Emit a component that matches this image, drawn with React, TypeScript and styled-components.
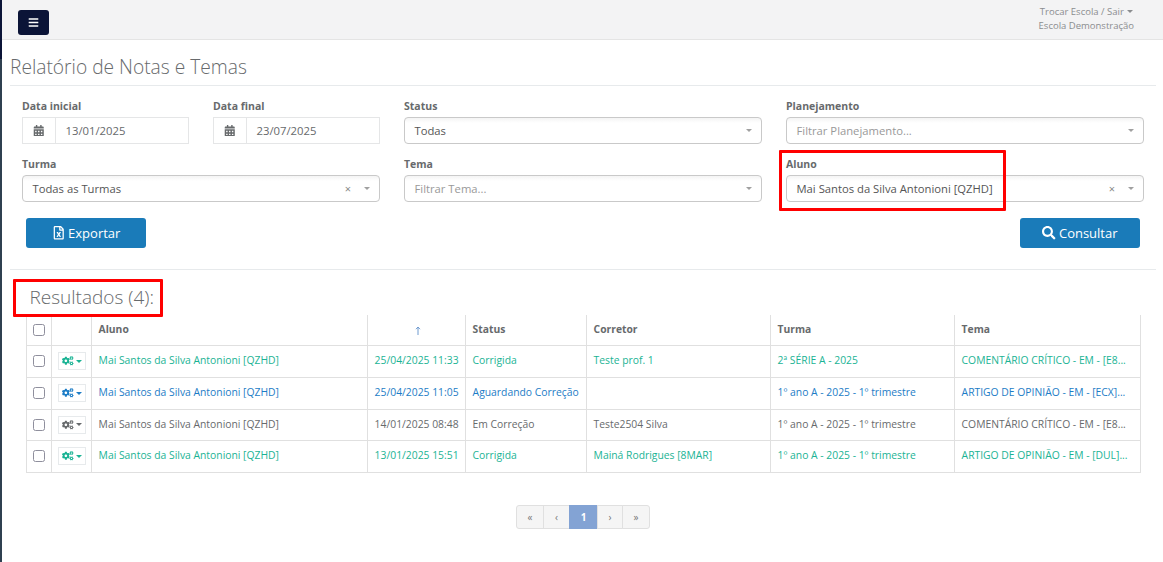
import styled, { createGlobalStyle } from 'styled-components';
import { FaBars, FaCalendarAlt, FaCogs, FaRegFileExcel, FaSearch } from 'react-icons/fa';

const GlobalStyle = createGlobalStyle`
  html, body {
    margin: 0;
    padding: 0;
    background: #fff;
    overflow: hidden;
  }
  body {
    font-family: "Open Sans", "Liberation Sans", sans-serif;
    font-size: 11px;
    color: #676a6c;
  }
  * {
    box-sizing: border-box;
  }
`;

type Tone = 'done' | 'waiting' | 'progress';

const toneColors: Record<Tone, string> = {
  done: '#1ab394',
  waiting: '#1c7cc6',
  progress: '#676a6c',
};

const Page = styled.div`
  position: relative;
  display: flex;
  width: 1163px;
  height: 562px;
  overflow: hidden;
`;

const SideStrip = styled.div`
  width: 2px;
  flex: none;
  background: linear-gradient(#0b1437 0, #0b1437 59px, #2f4050 59px);
`;

const Main = styled.div`
  flex: 1;
  min-width: 0;
`;

const TopBar = styled.header`
  height: 40px;
  background: #f3f3f4;
  border-bottom: 1px solid #e4e4e4;
  display: flex;
  justify-content: space-between;
  padding: 10px 29px 0 16px;
`;

const MenuButton = styled.button`
  width: 31px;
  height: 25px;
  padding: 0;
  border: none;
  border-radius: 3px;
  background: #0b1437;
  color: #fff;
  display: flex;
  align-items: center;
  justify-content: center;
  font-size: 11px;
`;

const UserBox = styled.div`
  margin-top: -5px;
  font-size: 9.5px;
  line-height: 14px;
  color: #8b8d8f;
  text-align: center;
`;

const Caret = styled.span`
  display: inline-block;
  margin-left: 3px;
  vertical-align: 2px;
  border-left: 3px solid transparent;
  border-right: 3px solid transparent;
  border-top: 3px solid #8b8d8f;
`;

const Content = styled.div`
  padding: 0 7px 0 8px;
`;

const PageTitle = styled.h2`
  margin: 0;
  height: 46px;
  padding-top: 14px;
  border-bottom: 1px solid #e7eaec;
  font-size: 19.2px;
  line-height: 25px;
  font-weight: 300;
  color: #676a6c;
`;

const FilterGrid = styled.div`
  display: grid;
  grid-template-columns: repeat(3, 358px);
  column-gap: 24px;
  row-gap: 13px;
  padding: 13px 0 0 12px;
`;

const DatePair = styled.div`
  display: grid;
  grid-template-columns: repeat(2, 167px);
  column-gap: 24px;
`;

const Field = styled.div`
  min-width: 0;
`;

const Label = styled.label`
  display: block;
  height: 18px;
  line-height: 15px;
  font-size: 10.5px;
  font-weight: 700;
  color: #676a6c;
`;

const DateInput = styled.div`
  display: flex;
  height: 27px;
  border: 1px solid #e5e6e7;
  font-size: 11.3px;
`;

const DateAddon = styled.span`
  width: 33px;
  flex: none;
  display: flex;
  align-items: center;
  justify-content: center;
  border-right: 1px solid #e5e6e7;
  color: #676a6c;
  font-size: 11.5px;
`;

const DateValue = styled.span`
  padding-left: 9.5px;
  line-height: 25px;
`;

const SelectBox = styled.div`
  display: flex;
  align-items: center;
  height: 27px;
  padding: 0 10px 0 9.5px;
  border: 1px solid #c9c9c9;
  border-radius: 4px;
  background: linear-gradient(#f4f4f4 0, #fff 5px);
  font-size: 11.25px;
`;

const SelectText = styled.span<{ $placeholder?: boolean }>`
  flex: 1;
  color: ${(p) => (p.$placeholder ? '#999' : '#555')};
`;

const ClearMark = styled.span`
  margin-right: 13px;
  color: #888;
  font-size: 11px;
`;

const SelectCaret = styled.span`
  width: 0;
  height: 0;
  margin-right: -1px;
  border-left: 3.5px solid transparent;
  border-right: 3.5px solid transparent;
  border-top: 3.5px solid #a0a0a0;
`;

const ActionRow = styled.div`
  display: flex;
  justify-content: space-between;
  padding: 16px 16px 0;
  height: 68px;
  border-bottom: 1px solid #e7eaec;
  width: 1146px;
`;

const ActionButton = styled.button`
  width: 120px;
  height: 30px;
  padding: 0;
  border: none;
  border-radius: 3px;
  background: #1a7bb9;
  color: #fff;
  display: flex;
  align-items: center;
  justify-content: center;
  gap: 3px;
  font-family: inherit;
  font-size: 13px;
  svg {
    font-size: 13.5px;
  }
`;

const ResultTitle = styled.h3`
  margin: 0;
  height: 45px;
  padding: 14px 0 0 19.5px;
  font-size: 19px;
  line-height: 26px;
  font-weight: 300;
  color: #676a6c;
`;

const TableWrap = styled.div`
  margin-left: 16px;
  width: 1114px;
`;

const Table = styled.table`
  width: 1114px;
  table-layout: fixed;
  border-collapse: collapse;
  font-size: 10.35px;
`;

const HeadCell = styled.th<{ $center?: boolean }>`
  height: 30px;
  padding: ${(p) => (p.$center ? '0 0 2px' : '0 7px 1px 6.6px')};
  border: 1px solid #e0e0e0;
  border-width: 0 1px 1px;
  text-align: ${(p) => (p.$center ? 'center' : 'left')};
  font-size: 10.3px;
  font-weight: 700;
  color: #676a6c;
  vertical-align: middle;
`;

const SortArrow = styled.svg`
  display: inline-block;
  width: 6px;
  height: 9px;
  margin-left: 3px;
  vertical-align: middle;
`;

const Row = styled.tr<{ $tone: Tone }>`
  color: ${(p) => toneColors[p.$tone]};
  &:nth-child(3) td {
    height: 31px;
  }
`;

const Cell = styled.td`
  height: 32px;
  padding: 0 7px 2px 6.6px;
  border: 1px solid #e0e0e0;
  white-space: nowrap;
  overflow: hidden;
  vertical-align: middle;
`;

const CheckCell = styled.td`
  padding: 0 0 2px;
  border: 1px solid #e0e0e0;
  text-align: center;
  vertical-align: middle;
`;

const CogCell = styled.td`
  padding: 0 0 0 1px;
  border: 1px solid #e0e0e0;
  text-align: center;
  vertical-align: middle;
`;

const CheckBox = styled.span`
  display: inline-block;
  width: 12px;
  height: 12px;
  border: 1px solid #8f8f9d;
  border-radius: 2.5px;
  background: #fff;
  vertical-align: middle;
`;

const CogButton = styled.span`
  display: inline-flex;
  align-items: center;
  justify-content: center;
  gap: 2px;
  width: 28px;
  height: 18px;
  border: 1px solid #e7eaec;
  background: #fff;
  vertical-align: middle;
  font-size: 11.5px;
`;

const CogCaret = styled.span`
  border-left: 3px solid transparent;
  border-right: 3px solid transparent;
  border-top: 3px solid currentColor;
`;

const Pagination = styled.nav`
  display: flex;
  justify-content: center;
  margin-top: 32px;
  margin-left: 16px;
  width: 1114px;
`;

const PageButton = styled.span<{ $active?: boolean; $w: number }>`
  width: ${(p) => p.$w}px;
  height: 24px;
  margin-left: -1px;
  display: flex;
  align-items: center;
  justify-content: center;
  border: 1px solid ${(p) => (p.$active ? '#83a3d4' : '#e0e0e0')};
  background: ${(p) => (p.$active ? '#83a3d4' : '#f5f5f5')};
  color: ${(p) => (p.$active ? '#fff' : '#777')};
  font-size: 10px;
  font-weight: ${(p) => (p.$active ? 700 : 400)};
  &:first-child {
    margin-left: 0;
    border-radius: 3px 0 0 3px;
  }
  &:last-child {
    border-radius: 0 3px 3px 0;
  }
`;

const Highlight = styled.div<{ $x: number; $y: number; $w: number; $h: number }>`
  position: absolute;
  left: ${(p) => p.$x}px;
  top: ${(p) => p.$y}px;
  width: ${(p) => p.$w}px;
  height: ${(p) => p.$h}px;
  border: 3px solid #f00;
  border-radius: 1px;
  pointer-events: none;
`;

const columns = [25, 40, 276, 98, 121, 184, 184, 186];

const rows: { tone: Tone; date: string; status: string; corrector: string; turma: string; tema: string }[] = [
  { tone: 'done', date: '25/04/2025 11:33', status: 'Corrigida', corrector: 'Teste prof. 1', turma: '2ª SÉRIE A - 2025', tema: 'COMENTÁRIO CRÍTICO - EM - [E8...' },
  { tone: 'waiting', date: '25/04/2025 11:05', status: 'Aguardando Correção', corrector: '', turma: '1º ano A - 2025 - 1º trimestre', tema: 'ARTIGO DE OPINIÃO - EM - [ECX]...' },
  { tone: 'progress', date: '14/01/2025 08:48', status: 'Em Correção', corrector: 'Teste2504 Silva', turma: '1º ano A - 2025 - 1º trimestre', tema: 'COMENTÁRIO CRÍTICO - EM - [E8...' },
  { tone: 'done', date: '13/01/2025 15:51', status: 'Corrigida', corrector: 'Mainá Rodrigues [8MAR]', turma: '1º ano A - 2025 - 1º trimestre', tema: 'ARTIGO DE OPINIÃO - EM - [DUL]...' },
];

const DateField = ({ label, value }: { label: string; value: string }) => (
  <Field>
    <Label>{label}</Label>
    <DateInput>
      <DateAddon>
        <FaCalendarAlt />
      </DateAddon>
      <DateValue>{value}</DateValue>
    </DateInput>
  </Field>
);

const SelectField = ({ label, value, placeholder, clearable }: { label: string; value: string; placeholder?: boolean; clearable?: boolean }) => (
  <Field>
    <Label>{label}</Label>
    <SelectBox>
      <SelectText $placeholder={placeholder}>{value}</SelectText>
      {clearable && <ClearMark>×</ClearMark>}
      <SelectCaret />
    </SelectBox>
  </Field>
);

const App = () => {
  return (
    <Page>
      <GlobalStyle />
      <SideStrip />
      <Main>
        <TopBar>
          <MenuButton aria-label="Menu">
            <FaBars />
          </MenuButton>
          <UserBox>
            <div>
              Trocar Escola / Sair
              <Caret />
            </div>
            <div>Escola Demonstração</div>
          </UserBox>
        </TopBar>
        <Content>
          <PageTitle>Relatório de Notas e Temas</PageTitle>
          <FilterGrid>
            <DatePair>
              <DateField label="Data inicial" value="13/01/2025" />
              <DateField label="Data final" value="23/07/2025" />
            </DatePair>
            <SelectField label="Status" value="Todas" />
            <SelectField label="Planejamento" value="Filtrar Planejamento..." placeholder />
            <SelectField label="Turma" value="Todas as Turmas" clearable />
            <SelectField label="Tema" value="Filtrar Tema..." placeholder />
            <SelectField label="Aluno" value="Mai Santos da Silva Antonioni [QZHD]" clearable />
          </FilterGrid>
          <ActionRow>
            <ActionButton>
              <FaRegFileExcel />
              Exportar
            </ActionButton>
            <ActionButton>
              <FaSearch />
              Consultar
            </ActionButton>
          </ActionRow>
          <ResultTitle>Resultados (4):</ResultTitle>
          <TableWrap>
            <Table>
              <colgroup>
                {columns.map((w, i) => (
                  <col key={i} style={{ width: w }} />
                ))}
              </colgroup>
              <thead>
                <tr>
                  <HeadCell $center>
                    <CheckBox />
                  </HeadCell>
                  <HeadCell />
                  <HeadCell>Aluno</HeadCell>
                  <HeadCell $center>
                    <SortArrow viewBox="0 0 6 9" fill="none" stroke="#6f9bd0" strokeWidth="1">
                      <path d="M3 9V1M1 3.2 3 1l2 2.2" />
                    </SortArrow>
                  </HeadCell>
                  <HeadCell>Status</HeadCell>
                  <HeadCell>Corretor</HeadCell>
                  <HeadCell>Turma</HeadCell>
                  <HeadCell>Tema</HeadCell>
                </tr>
              </thead>
              <tbody>
                {rows.map((row, i) => (
                  <Row key={i} $tone={row.tone}>
                    <CheckCell>
                      <CheckBox />
                    </CheckCell>
                    <CogCell>
                      <CogButton>
                        <FaCogs />
                        <CogCaret />
                      </CogButton>
                    </CogCell>
                    <Cell>Mai Santos da Silva Antonioni [QZHD]</Cell>
                    <Cell>{row.date}</Cell>
                    <Cell>{row.status}</Cell>
                    <Cell>{row.corrector}</Cell>
                    <Cell>{row.turma}</Cell>
                    <Cell>{row.tema}</Cell>
                  </Row>
                ))}
              </tbody>
            </Table>
          </TableWrap>
          <Pagination>
            <PageButton $w={28}>«</PageButton>
            <PageButton $w={27}>‹</PageButton>
            <PageButton $w={29} $active>1</PageButton>
            <PageButton $w={26}>›</PageButton>
            <PageButton $w={28}>»</PageButton>
          </Pagination>
        </Content>
      </Main>
      <Highlight $x={779} $y={150} $w={227} $h={61} />
      <Highlight $x={13} $y={279} $w={150} $h={38} />
    </Page>
  );
};

export default App;
